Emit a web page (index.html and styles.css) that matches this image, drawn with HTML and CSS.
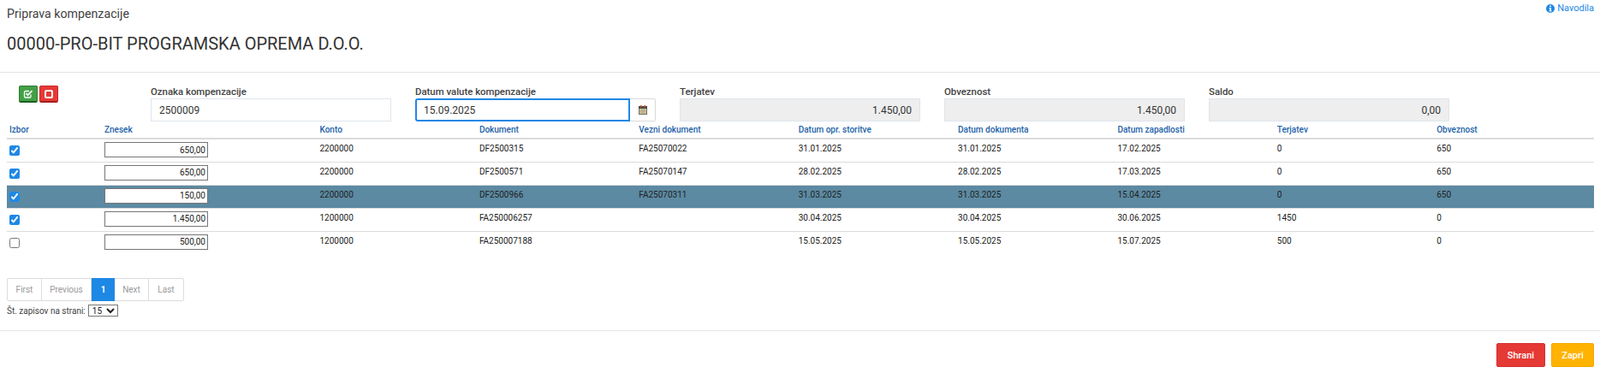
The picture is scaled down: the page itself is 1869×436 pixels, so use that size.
FILE: index.html
```html
<!DOCTYPE html>
<html lang="sl">
<head>
<meta charset="utf-8">
<title>Priprava kompenzacije</title>
<link rel="stylesheet" href="styles.css">
</head>
<body>
<header class="head">
  <div class="head-top">
    <h4 class="title">Priprava kompenzacije</h4>
    <a class="help" href="#"><svg class="help-icon" viewBox="0 0 10 10"><circle cx="5" cy="5" r="5" fill="#1e88e5"/><rect x="4.2" y="1.5" width="1.7" height="1.6" fill="#fff"/><path d="M3.5 4h2.4v3.6h.7v1H3.5v-1h.7V5h-.7z" fill="#fff"/></svg>Navodila</a>
  </div>
  <h3 class="partner">00000-PRO-BIT PROGRAMSKA OPREMA D.O.O.</h3>
</header>
<main class="body">
  <section class="form-row">
    <div class="actions">
      <button class="icon-btn green" type="button"><svg viewBox="0 0 12 12" width="12" height="12"><path d="M9 6.5v2.2A1.3 1.3 0 0 1 7.700 10H2.800A1.300 1.300 0 0 1 1.500 8.700V3.800A1.300 1.300 0 0 1 2.800 2.500H7" fill="none" stroke="#fff" stroke-width="1.300"/><path d="M3.500 5.200 5.500 7.200 10.500 2.200" fill="none" stroke="#fff" stroke-width="1.800"/></svg></button>
      <button class="icon-btn red" type="button"><svg viewBox="0 0 12 12" width="12" height="12"><rect x="2" y="2" width="8" height="8" rx="1.500" fill="none" stroke="#fff" stroke-width="2"/></svg></button>
    </div>
    <div class="field">
      <label class="label">Oznaka kompenzacije</label>
      <input class="text" type="text" value="2500009">
    </div>
    <div class="field">
      <label class="label">Datum valute kompenzacije</label>
      <div class="date-group">
        <input class="text focus" type="text" value="15.09.2025">
        <span class="date-btn"><svg viewBox="0 0 10 11" width="10" height="11"><rect x="0.500" y="1.500" width="9" height="9" fill="#e3cf9c" stroke="#6d6a63"/><rect x="0" y="1" width="10" height="3" fill="#4b4b4b"/><rect x="2" y="0" width="1.500" height="2.500" fill="#c0561f"/><rect x="6.500" y="0" width="1.500" height="2.500" fill="#c0561f"/><path d="M0 6h10M0 8h10M3 4v6M5 4v6M7 4v6" stroke="#8f8a80" stroke-width=".5"/></svg></span>
      </div>
    </div>
    <div class="field">
      <label class="label">Terjatev</label>
      <input class="text readonly" type="text" value="1.450,00" readonly>
    </div>
    <div class="field">
      <label class="label">Obveznost</label>
      <input class="text readonly" type="text" value="1.450,00" readonly>
    </div>
    <div class="field">
      <label class="label">Saldo</label>
      <input class="text readonly" type="text" value="0,00" readonly>
    </div>
  </section>

  <table class="grid">
    <colgroup>
      <col class="c1"><col class="c2"><col class="cn"><col class="cn"><col class="cn"><col class="cn"><col class="cn"><col class="cn"><col class="cn"><col>
    </colgroup>
    <thead>
      <tr><th>Izbor</th><th>Znesek</th><th>Konto</th><th>Dokument</th><th>Vezni dokument</th><th>Datum opr. storitve</th><th>Datum dokumenta</th><th>Datum zapadlosti</th><th>Terjatev</th><th>Obveznost</th></tr>
    </thead>
    <tbody>
      <tr><td><input class="check" type="checkbox" checked></td><td><input class="amount" type="text" value="650,00"></td><td>2200000</td><td>DF2500315</td><td>FA25070022</td><td>31.01.2025</td><td>31.01.2025</td><td>17.02.2025</td><td>0</td><td>650</td></tr>
      <tr><td><input class="check" type="checkbox" checked></td><td><input class="amount" type="text" value="650,00"></td><td>2200000</td><td>DF2500571</td><td>FA25070147</td><td>28.02.2025</td><td>28.02.2025</td><td>17.03.2025</td><td>0</td><td>650</td></tr>
      <tr class="selected"><td><input class="check" type="checkbox" checked></td><td><input class="amount" type="text" value="150,00"></td><td>2200000</td><td>DF2500966</td><td>FA25070311</td><td>31.03.2025</td><td>31.03.2025</td><td>15.04.2025</td><td>0</td><td>650</td></tr>
      <tr><td><input class="check" type="checkbox" checked></td><td><input class="amount" type="text" value="1.450,00"></td><td>1200000</td><td>FA250006257</td><td></td><td>30.04.2025</td><td>30.04.2025</td><td>30.06.2025</td><td>1450</td><td>0</td></tr>
      <tr><td><input class="check" type="checkbox"></td><td><input class="amount" type="text" value="500,00"></td><td>1200000</td><td>FA250007188</td><td></td><td>15.05.2025</td><td>15.05.2025</td><td>15.07.2025</td><td>500</td><td>0</td></tr>
    </tbody>
  </table>

  <nav class="pager">
    <a class="page first">First</a><a class="page prev">Previous</a><a class="page current">1</a><a class="page next">Next</a><a class="page last">Last</a>
  </nav>
  <div class="per-page">
    <span>Št. zapisov na strani:</span>
    <select class="per-select"><option>15</option></select>
  </div>
</main>
<footer class="foot">
  <button class="btn danger" type="button">Shrani</button>
  <button class="btn warn" type="button">Zapri</button>
</footer>
</body>
</html>
```

FILE: styles.css
```css
* { box-sizing: border-box; }
html, body { margin: 0; padding: 0; background: #fff; }
body { font-family: Roboto, "Liberation Sans", sans-serif; color: #212121; font-size: 10px; height: 436px; overflow: hidden; }

.head { height: 85px; border-bottom: 1px solid #e4e4e4; padding: 0 7px 0 8px; }
.head-top { display: flex; justify-content: space-between; align-items: flex-start; height: 38px; }
.title { margin: 7px 0 0; font-size: 14.2px; line-height: 18px; font-weight: 400; color: #424242; }
.help { display: flex; align-items: center; gap: 3px; color: #1e88e5; font-size: 11px; line-height: 14px; margin: 3px 0 0 0; text-decoration: none; }
.help-icon { width: 10px; height: 10px; }
.partner { margin: 0; font-size: 20px; line-height: 26px; font-weight: 400; color: #333; }

.body { padding: 15px 7px 0 8px; }
.form-row { display: flex; gap: 28px; height: 42px; }
.actions { display: flex; gap: 2px; width: 140px; padding: 0 0 0 14px; }
.icon-btn { width: 22px; height: 20px; padding: 0; border: 1px solid; border-bottom-width: 2px; border-radius: 2px; display: flex; align-items: center; justify-content: center; }
.icon-btn.green { background: #43a047; border-color: #2e7d32 #2e7d32 #1b5e20; }
.icon-btn.red { background: #e53935; border-color: #c62828 #c62828 #a31d1d; }
.field { width: 281px; display: flex; flex-direction: column; }
.label { font-size: 11.4px; line-height: 15px; font-weight: 500; color: #424242; height: 15px; }
.text { height: 27px; width: 100%; border: 1px solid #dfe6ee; border-radius: 0; padding: 0 9px; font: 400 12px Roboto, sans-serif; color: #333; background: #fff; outline: none; }
.text.focus { border: 2px solid #1e88e5; border-radius: 3px 0 0 3px; padding: 0 8px; width: 251px; }
.text.readonly { background: #eee; text-align: right; color: #333; }
.date-group { display: flex; }
.date-btn { width: 30px; height: 27px; border: 1px solid #d9d9d9; border-left: 0; border-radius: 0 2px 2px 0; display: flex; align-items: center; justify-content: center; }

.grid { border-collapse: collapse; table-layout: fixed; width: 1854px; }
.c1 { width: 111px; } .c2 { width: 251.5px; } .cn { width: 186.4px; }
.grid th { height: 20px; padding: 0 3px; text-align: left; font-size: 10px; font-weight: 500; color: #1d5fa8; border-bottom: 2px solid #dcdcdc; vertical-align: middle; }
.grid td { height: 27px; padding: 5px 3px 0; font-size: 10px; line-height: 12px; color: #212121; vertical-align: top; border-bottom: 1px solid #dcdcdc; }
.grid tbody tr:last-child td { border-bottom: 0; }
.grid tr.selected td { background: #5c8aa2; }
.check { display: block; width: 12px; height: 12px; margin: 2px 0 0; accent-color: #1e88e5; }
.amount { display: block; width: 121px; height: 18px; margin-top: -2px; border: 1px solid #767676; border-radius: 0; padding: 0 2px; text-align: right; font: 400 10px Roboto, sans-serif; color: #212121; background: #fff; outline: none; }

.pager { display: flex; width: 207px; height: 27px; margin-top: 28px; border: 1px solid #dcdcdc; border-radius: 2px; color: #999; }
.page { display: flex; align-items: center; justify-content: center; border-right: 1px solid #dcdcdc; font-size: 10px; }
.first { width: 40px; } .prev { width: 58px; } .current { width: 27px; background: #1e88e5; color: #fff; font-weight: 700; border-right: 0; margin-top: -1px; margin-bottom: -1px; }
.next { width: 40px; } .last { flex: 1; border-right: 0; }
.per-page { display: flex; align-items: center; gap: 3px; margin-top: 4px; height: 14px; color: #424242; font-size: 10px; }
.per-select { width: 35px; height: 14px; padding: 0; border: 1px solid #767676; border-radius: 0; background: #fff; font: 400 10px Roboto, sans-serif; color: #212121; }

.foot { margin-top: 16px; border-top: 1px solid #e4e4e4; display: flex; justify-content: flex-end; gap: 7px; padding: 14px 7px 0 0; }
.btn { height: 28px; border-radius: 2px; color: #fff; font: 500 11px Roboto, sans-serif; padding: 0; }
.danger { width: 57px; background: #e53935; border: 1px solid #d32f2f; }
.warn { width: 50px; background: #ffb300; border: 1px solid #f0a800; }
```
